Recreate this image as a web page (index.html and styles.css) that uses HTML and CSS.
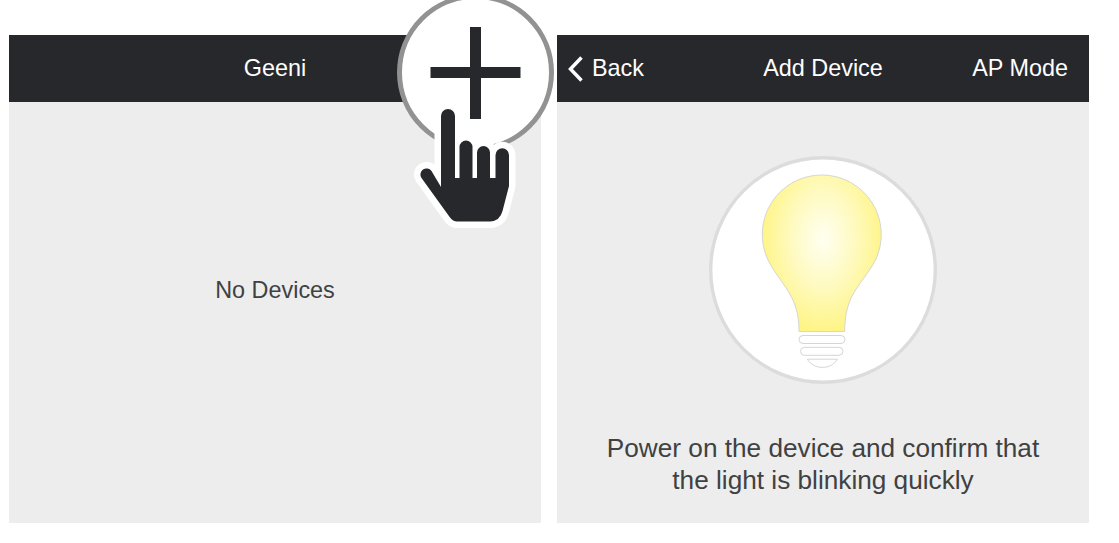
FILE: index.html
```html
<!DOCTYPE html>
<html lang="en">
<head>
  <meta charset="UTF-8">
  <meta name="viewport" content="width=device-width, initial-scale=1.0">
  <title>Geeni - Add Device</title>
  <link rel="stylesheet" href="styles.css">
</head>
<body>
  <main class="screens">
    <section class="screen">
      <header class="bar">
        <h1>Geeni</h1>
      </header>
      <p class="empty">No Devices</p>
      <!-- Magnified add button with the tap pointer over it -->
      <svg class="add-button" width="160" height="236" viewBox="395 0 160 236" aria-label="Add">
        <circle cx="475.5" cy="72.5" r="76" fill="#fff" stroke="#929292" stroke-width="5"/>
        <path d="M470 27h11v40h39.5v11H481v41h-11V78h-39.5V67H470z" fill="#27282c"/>
        <path class="hand" d="M441 187V116a7 7 0 0 1 14 0V178H459.5V147a6.500 6.500 0 0 1 13 0V178H477V152.500a6.500 6.500 0 0 1 13 0V178H495.500V155a6.750 6.750 0 0 1 13.500 0V186L502.500 211Q500 221 490 221.500H457Q453 221.500 450 217.500L421.500 178A6 6 0 0 1 431.500 171z"/>
      </svg>
    </section>

    <section class="screen">
      <header class="bar">
        <a class="back" href="#">
          <svg width="16" height="28" viewBox="0 0 16 28"><path d="M13.500 2.500L2.500 14L13.500 25.500" fill="none" stroke="#fff" stroke-width="3.500"/></svg>
          Back
        </a>
        <h1>Add Device</h1>
        <a class="mode" href="#">AP Mode</a>
      </header>
      <svg class="bulb" width="228" height="228" viewBox="709 156 228 228">
        <defs>
          <radialGradient id="glow" gradientUnits="userSpaceOnUse" cx="823" cy="239" r="98" gradientTransform="translate(823 239) scale(.66 1) translate(-823 -239)">
            <stop offset="0" stop-color="#fffff2"/>
            <stop offset=".5" stop-color="#fefabf"/>
            <stop offset="1" stop-color="#fef480"/>
          </radialGradient>
        </defs>
        <circle cx="823" cy="270" r="112.300" fill="#fff" stroke="#dcdcde" stroke-width="3.400"/>
        <path d="M799 331.500C799 318 797 308 791.500 297C786 286 773 271 768 260A59.500 59.500 0 1 1 875.500 260C870 271 857 286 851.500 297C846.500 308 844.700 318 844.700 331.500z" fill="url(#glow)" stroke="#d8d5d2"/>
        <g fill="#fff" stroke="#d6d4d8">
          <rect x="799" y="335.500" width="46" height="8" rx="4"/>
          <rect x="800.500" y="347.300" width="42.500" height="8" rx="4"/>
          <path d="M807.300 359.200H837.500C834 364.500 829 367.400 822.400 367.400S811 364.500 807.300 359.200z"/>
        </g>
      </svg>
      <p class="hint">Power on the device and confirm that<br>the light is blinking quickly</p>
    </section>
  </main>
</body>
</html>
```

FILE: styles.css
```css
* {
  box-sizing: border-box;
}
body {
  font-family: "Liberation Sans", Arial, sans-serif;
  margin: 0;
  background: #ffffff;
  color: #414142;
}
.screens {
  display: flex;
  gap: 16px;
  padding: 35px 0 0 9px;
}
.screen {
  position: relative;
  display: flex;
  flex-direction: column;
  align-items: center;
  width: 532px;
  height: 488px;
  background: #ededed;
}
.bar {
  display: grid;
  grid-template-columns: 1fr auto 1fr;
  align-items: center;
  width: 100%;
  height: 67px;
  padding: 0 11px;
  background: #27282c;
  color: #ffffff;
  font-size: 23.4px;
}
.bar h1 {
  grid-column: 2;
  margin: 0;
  font-size: inherit;
  font-weight: normal;
}
.bar a {
  color: inherit;
  text-decoration: none;
}
.back {
  display: flex;
  align-items: center;
  gap: 8px;
}
.bar .mode {
  padding-right: 10px;
  text-align: right;
}
.empty {
  margin: 175px 0 0;
  font-size: 23.4px;
  line-height: 27px;
}
/* Overlaps the bar and the gap between the screens */
.add-button {
  position: absolute;
  top: -35px;
  left: 386px;
  z-index: 1;
}
.hand {
  fill: #27282c;
  stroke: #ffffff;
  stroke-width: 13px;
  stroke-linejoin: round;
  paint-order: stroke;
}
.bulb {
  margin-top: 54px;
}
.hint {
  margin: 49px 0 0;
  font-size: 26.2px;
  line-height: 31.5px;
  text-align: center;
}
```
